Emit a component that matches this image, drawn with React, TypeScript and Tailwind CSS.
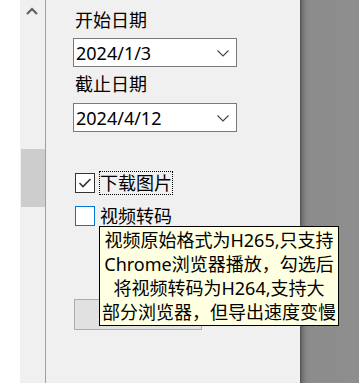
import React from "react";

const font = { fontFamily: '"Noto Sans", "Noto Sans CJK SC", sans-serif' };

function Combo({ value }: { value: string }) {
  return (
    <div className="flex h-[29px] w-[164px] items-center justify-between border border-[#7a7a7a] bg-white pl-[2px] pr-[7px]">
      <span className="text-[18px] leading-[24px] text-black">{value}</span>
      <svg width="12" height="7" viewBox="0 0 12 7" className="mt-[1px]">
        <path d="M0.5 0.5 L6 6 L11.5 0.5" fill="none" stroke="#444" strokeWidth="1.1" />
      </svg>
    </div>
  );
}

export default function App() {
  return (
    <div className="relative flex h-[383px] w-[359px] overflow-hidden bg-white text-black" style={font}>
      {/* left white strip */}
      <div className="w-[20px] shrink-0 bg-white" />
      {/* scrollbar */}
      <div className="flex w-[26px] shrink-0 flex-col items-start border-r border-[#a0a0a0] bg-[#f0f0f0]">
        <div className="flex h-[24px] w-[25px] items-center justify-center">
          <svg width="12" height="8" viewBox="0 0 12 8" className="mt-[-2px] ml-[-2px]">
            <path d="M1 7 L6 2 L11 7" fill="none" stroke="#606060" strokeWidth="2.2" />
          </svg>
        </div>
        <div className="ml-[1px] mt-[125px] h-[58px] w-[24px] bg-[#cdcdcd]" />
      </div>
      {/* panel */}
      <div className="flex w-[254px] shrink-0 flex-col bg-[#f0f0f0] pl-[27px] pt-[8px]">
        <div className="ml-[2px] text-[18px] leading-[24px]">开始日期</div>
        <div className="mt-[6px]">
          <Combo value="2024/1/3" />
        </div>
        <div className="ml-[2px] mt-[5px] text-[18px] leading-[24px]">截止日期</div>
        <div className="mt-[7px]">
          <Combo value="2024/4/12" />
        </div>
        <div className="ml-[2px] mt-[39px] flex items-center">
          <div className="flex h-[20px] w-[20px] items-center justify-center border border-[#333333] bg-white">
            <svg width="14" height="12" viewBox="0 0 14 12">
              <path d="M1.5 6 L5 9.5 L12.5 2" fill="none" stroke="#333" strokeWidth="1.6" />
            </svg>
          </div>
          <div className="ml-[4px] border border-dotted border-black text-[18px] leading-[22px]">下载图片</div>
        </div>
        <div className="ml-[2px] mt-[9px] flex items-center">
          <div className="h-[20px] w-[20px] border border-[#0078d7] bg-white" />
          <div className="ml-[4px] border border-transparent text-[18px] leading-[22px]">视频转码</div>
        </div>
        <div className="ml-[1px] mt-[71px] h-[31px] w-[128px] border border-[#adadad] bg-[#e1e1e1]" />
      </div>
      {/* right dark area */}
      <div
        className="flex-1"
        style={{ background: "linear-gradient(to right, #505050 0px, #6e6e6e 2px, #868686 6px, #8c8c8c 10px, #8e8e8e 100%)" }}
      />
      {/* tooltip */}
      <div className="absolute left-[99px] top-[226px] w-[240px] border border-black bg-[#ffffe1] pt-[1px] pb-[1px] text-center text-[18px] leading-[24px] text-black">
        <div className="whitespace-nowrap">视频原始格式为H265,只支持</div>
        <div className="whitespace-nowrap">Chrome浏览器播放，勾选后</div>
        <div className="whitespace-nowrap">将视频转码为H264,支持大</div>
        <div className="whitespace-nowrap">部分浏览器，但导出速度变慢</div>
      </div>
    </div>
  );
}
